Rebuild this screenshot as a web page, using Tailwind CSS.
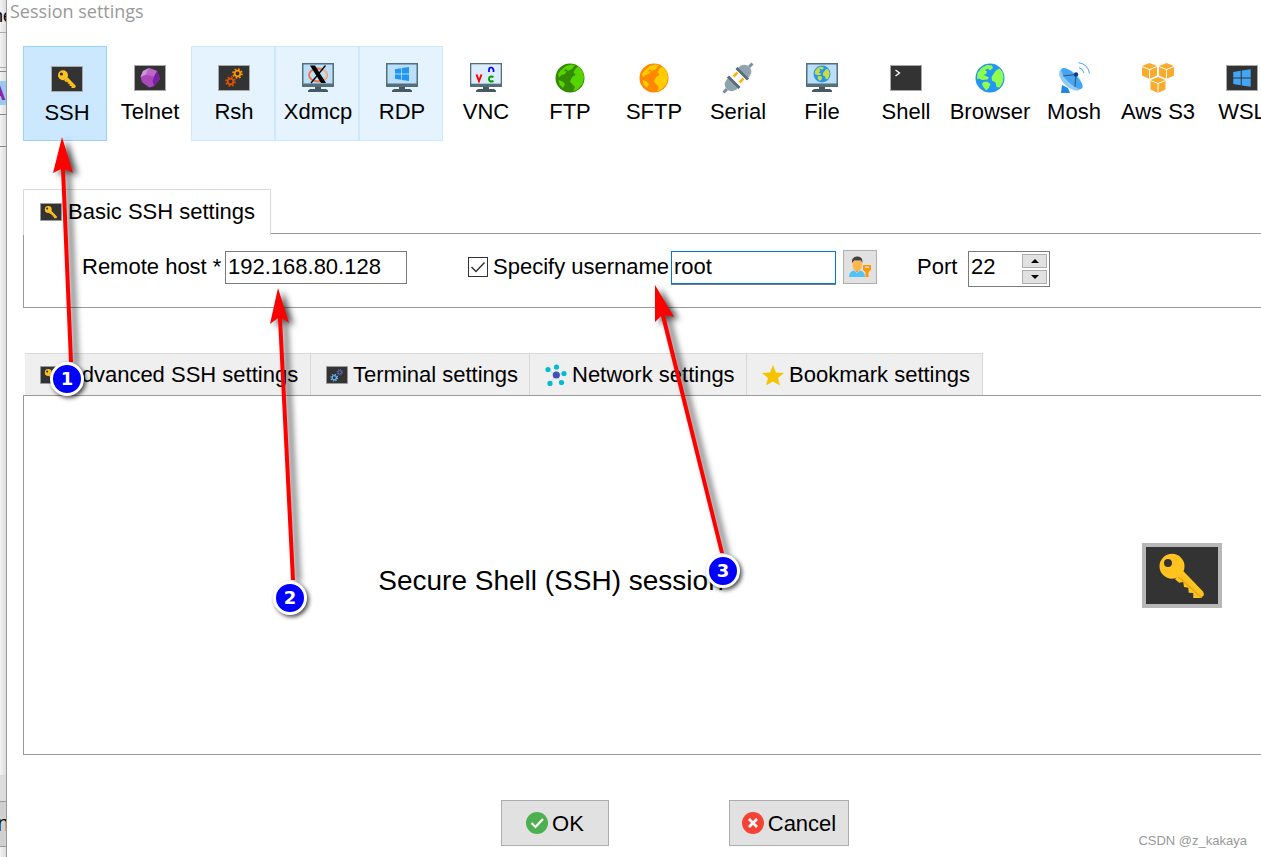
<!DOCTYPE html>
<html lang="en">
<head>
  <meta charset="UTF-8">
  <meta name="viewport" content="width=device-width, initial-scale=1.0">
  <title>Session settings</title>
  <script src="https://cdn.jsdelivr.net/npm/@tailwindcss/browser@4"></script>
</head>
<body class="bg-white text-black font-['Liberation_Sans',Arial,sans-serif] text-[22px] leading-6 overflow-hidden">

  <!-- Shared icon parts -->
  <svg class="hidden" aria-hidden="true">
    <symbol id="term" viewBox="0 0 32 32">
      <rect x=".5" y="3.5" width="31" height="25" fill="#333" stroke="#a9a9a9"/>
    </symbol>
    <symbol id="key" viewBox="0 0 32 32">
      <path d="M13.2 17.5L14.9 18.9L16.5 18.6L16.8 20.6L18.5 20.9L18.7 22.9L20.5 23V25H23.6L24.8 23.8L24.5 22.5L16.5 14.2Z" fill="#ffc31f"/>
      <path d="M14.5 16.5L23.8 24.8" stroke="#e5a50f" stroke-width=".6"/>
      <path fill-rule="evenodd" d="M12 7.3a5 5 0 1 0 0 10a5 5 0 1 0 0-10ZM10.4 9.4a1.6 1.6 0 1 1 0 3.2a1.6 1.6 0 1 1 0-3.2Z" fill="#ffc31f"/>
    </symbol>
    <symbol id="monitor" viewBox="0 0 32 32">
      <path d="M0 1H32V25H0Z" fill="#546e7a"/>
      <path d="M1.500 2.500H30.500V21.500H1.500Z" fill="#bbdefb"/>
      <path d="M13 25H19V27H24L26 28.500V30H6V28.500L8 27H13Z" fill="#455a64"/>
    </symbol>
    <symbol id="win" viewBox="0 0 16 16">
      <path d="M1 3.200L7 2.200V7.600H1ZM7.800 2L15 1V7.600H7.800ZM1 8.400H7V13.800L1 12.800ZM7.800 8.400H15V15L7.800 14Z"/>
    </symbol>
    <symbol id="lands" viewBox="0 0 32 32">
      <path d="M3.500 11L8 5.500L13 3L18 3.500L19 6L16 8.500L14 6.500L11 8L13 9.500L12 12L9.500 13L12 14L15 15.500L13.500 17.500L8 18L5 16.500L3 17Z"/>
      <path d="M9 20L13 19.500L16.500 22L15 25.500L12.500 28.500L10 26L8 22.500Z"/>
      <path d="M19.500 12L22 8.500L25.500 6.500L28.500 10L29.500 15L28.500 21L25.500 25.500L22.500 25L21.500 20.500L18 18.500L17.500 15Z"/>
    </symbol>
    <symbol id="lands-wide" viewBox="0 0 32 32">
      <path d="M7 8L12 4L17 2.500L21 3L18 7L14 9L11.500 7L10 9.500L13 9L11 12L7.500 13L5 15.500L4 12Z"/>
      <path d="M22 6L24.500 4.500L28.500 9L30 15L28.500 22L24 27L19 29.500L21 25L18.500 22.500L16 19.500L18 15L21.500 13L19.500 10Z"/>
      <path d="M4.500 18L8.500 19.500L11 22L9 26L5.500 22.500Z"/>
    </symbol>
    <symbol id="gear" viewBox="0 0 12 12">
      <circle cx="6" cy="6" r="3.100" fill="none" stroke="currentColor" stroke-width="1.900"/>
      <circle cx="6" cy="6" r="4.900" fill="none" stroke="currentColor" stroke-width="1.700" stroke-dasharray="1.925 1.925"/>
    </symbol>
  </svg>

  <div class="relative flex min-h-screen">

    <!-- Edge of the window behind the dialog -->
    <div class="flex w-[7px] shrink-0 flex-col overflow-hidden border-r border-[#999] bg-linear-to-r from-[#f4f4f4] to-[#dedede]" aria-hidden="true">
      <div class="flex h-[33px] items-center justify-center border-b border-[#aaa] text-[18px]"><span>ne</span></div>
      <div class="h-[35px] border-b border-[#aaa]"></div>
      <div class="mt-[3px] flex h-11 items-center justify-end border-t border-b border-[#888]">
        <span class="bg-[#9ac8f0] font-bold text-[#8e24aa]">A</span>
      </div>
      <div class="h-8 border-b border-[#888]"></div>
      <div class="grow"></div>
      <div class="h-[26px] bg-[#dcdcdc]"></div>
      <div class="flex h-[46px] items-center justify-center border-t border-b border-[#999] bg-[#d0d0d0]"><span>n</span></div>
      <div class="h-[10px]"></div>
    </div>

    <!-- Dialog -->
    <main class="flex min-w-0 grow flex-col">
      <h1 class="pl-[3px] font-['Open_Sans','Noto_Sans',sans-serif] text-[18px] leading-[22px] text-[#999]">Session settings</h1>

      <!-- Session types -->
      <nav class="mt-6 ml-4 flex overflow-hidden whitespace-nowrap">
        <button class="flex h-[95px] w-[84px] shrink-0 flex-col items-center border border-[#99d1ff] bg-[#cce8ff] pt-4 pl-1">
          <svg class="size-8"><use href="#term"/><use href="#key"/></svg>
          <span class="mt-[6px]">SSH</span>
        </button>
        <button class="flex h-[95px] w-[84px] shrink-0 flex-col items-center border border-transparent pt-[15px] pl-[2px]">
          <svg class="size-8" viewBox="0 0 32 32">
            <use href="#term"/>
            <path d="M15 6L23 9L26 17L20 24L15.500 25.500L8 20L6.500 15L9 9Z" fill="#ab47bc"/>
            <path d="M15 6L23 9L20 14.500L11.500 13Z" fill="#ba68c8"/>
            <path d="M15 6L9 9L6.500 15L11.500 13Z" fill="#ce93d8"/>
            <path d="M23 9L26 17L20 24L18.500 19L20 14.500Z" fill="#7b1fa2"/>
            <path d="M11.500 13L20 14.500L18.500 19L15.500 25.500L8 20Z" fill="#ab47bc"/>
          </svg>
          <span class="mt-[6px]">Telnet</span>
        </button>
        <button class="flex h-[95px] w-[84px] shrink-0 flex-col items-center border border-[#cce8ff] bg-[#e5f3ff] pt-[15px] pl-[2px]">
          <svg class="size-8" viewBox="0 0 32 32">
            <use href="#term"/>
            <use href="#gear" x="14" y="6" width="11" height="11" color="#ff9800"/>
            <use href="#gear" x="7" y="14" width="11" height="11" color="#e65100"/>
          </svg>
          <span class="mt-[6px]">Rsh</span>
        </button>
        <button class="flex h-[95px] w-[84px] shrink-0 flex-col items-center border border-[#cce8ff] bg-[#e5f3ff] pt-[15px] pl-[2px]">
          <svg class="size-8" viewBox="0 0 32 32">
            <use href="#monitor"/>
            <ellipse cx="16" cy="13" rx="9" ry="6.500" fill="none" stroke="#f4703a" stroke-width="1.800"/>
            <path d="M19 7a9 6.500 0 0 1 0 12" fill="none" stroke="#ffb980" stroke-width="1.500"/>
            <path d="M8 3.500H13L24 21H19Z" fill="#000"/>
            <path d="M23.500 3.500L9 21" stroke="#000" stroke-width="1.300"/>
          </svg>
          <span class="mt-[6px]">Xdmcp</span>
        </button>
        <button class="flex h-[95px] w-[84px] shrink-0 flex-col items-center border border-[#cce8ff] bg-[#e5f3ff] pt-[15px] pl-[2px]">
          <svg class="size-8" viewBox="0 0 32 32">
            <use href="#monitor"/>
            <use href="#win" x="8" y="4" width="16" height="16" fill="#2196f3"/>
          </svg>
          <span class="mt-[6px]">RDP</span>
        </button>
        <button class="flex h-[95px] w-[84px] shrink-0 flex-col items-center border border-transparent pt-[15px] pl-[2px]">
          <svg class="size-8" viewBox="0 0 32 32">
            <use href="#monitor"/>
            <path d="M1.500 2.500H30.500V21.500H1.500Z" fill="#dcecfb"/>
            <g fill="none" stroke-width="2">
              <path d="M6.500 12.500L9 19L11.500 12.500" stroke="#f00"/>
              <path d="M19 10V8Q19 5.500 21 5.500T23.500 8V10" stroke="#00f" stroke-width="1.700"/>
              <path d="M23.500 15Q19 13.500 19 17T23.500 19" stroke="#00a000"/>
            </g>
          </svg>
          <span class="mt-[6px]">VNC</span>
        </button>
        <button class="flex h-[95px] w-[84px] shrink-0 flex-col items-center border border-transparent pt-[15px] pl-[2px]">
          <svg class="size-8" viewBox="0 0 32 32">
            <circle cx="16" cy="16" r="14.500" fill="#338a00"/>
            <use href="#lands-wide" fill="#55d400"/>
          </svg>
          <span class="mt-[6px]">FTP</span>
        </button>
        <button class="flex h-[95px] w-[84px] shrink-0 flex-col items-center border border-transparent pt-[15px] pl-[2px]">
          <svg class="size-8" viewBox="0 0 32 32">
            <circle cx="16" cy="16" r="14.500" fill="#ff8800"/>
            <use href="#lands-wide" fill="#ffcc00"/>
          </svg>
          <span class="mt-[6px]">SFTP</span>
        </button>
        <button class="flex h-[95px] w-[84px] shrink-0 flex-col items-center border border-transparent pt-[15px] pl-[2px]">
          <svg class="size-8" viewBox="0 0 32 32">
            <path d="M1.500 30.500L5 27M27 5L30.500 1.500" stroke="#78909c" stroke-width="3"/>
            <path d="M6 16L16 26Q12 31 6.500 28.500L3.500 25.500Q1 21 6 16Z" fill="#90a4ae"/>
            <path d="M16 6L26 16Q31 11 28.500 6.500L25.500 3.500Q20 1 16 6Z" fill="#90a4ae"/>
            <path d="M11.500 14.500L15.500 10.500M17.500 20.500L21.500 16.500" stroke="#ffb300" stroke-width="2.500"/>
            <path d="M6 14.500L17.500 26M14.500 6L26 17.500" stroke="#546e7a" stroke-width="3"/>
          </svg>
          <span class="mt-[6px]">Serial</span>
        </button>
        <button class="flex h-[95px] w-[84px] shrink-0 flex-col items-center border border-transparent pt-[15px] pl-[2px]">
          <svg class="size-8" viewBox="0 0 32 32">
            <use href="#monitor"/>
            <circle cx="16" cy="12" r="8.500" fill="#2196f3"/>
            <use href="#lands" x="7" y="3" width="18" height="18" fill="#cddc39"/>
          </svg>
          <span class="mt-[6px]">File</span>
        </button>
        <button class="flex h-[95px] w-[84px] shrink-0 flex-col items-center border border-transparent pt-[15px] pl-[2px]">
          <svg class="size-8" viewBox="0 0 32 32">
            <use href="#term"/>
            <path d="M5.500 8L9.500 11L5.500 14" fill="none" stroke="#fff" stroke-width="1.300"/>
          </svg>
          <span class="mt-[6px]">Shell</span>
        </button>
        <button class="flex h-[95px] w-[84px] shrink-0 flex-col items-center border border-transparent pt-[15px] pl-[2px]">
          <svg class="size-8" viewBox="0 0 32 32">
            <circle cx="16" cy="16" r="14.500" fill="#2196f3"/>
            <use href="#lands" fill="#8fff4f"/>
          </svg>
          <span class="mt-[6px]">Browser</span>
        </button>
        <button class="flex h-[95px] w-[84px] shrink-0 flex-col items-center border border-transparent pt-[15px] pl-[2px]">
          <svg class="size-8" viewBox="0 0 32 32">
            <path d="M4 23L10 26L12 31H3Z" fill="#1e88e5"/>
            <ellipse cx="12.500" cy="17.500" rx="14" ry="7.500" transform="rotate(44 12.500 17.500)" fill="#90caf9"/>
            <ellipse cx="14" cy="16.500" rx="14" ry="5" transform="rotate(44 14 16.500)" fill="#42a5f5"/>
            <path d="M5 14L18 12.500L17 25" fill="none" stroke="#455a64" stroke-width="1.200"/>
            <circle cx="18" cy="12.500" r="2.200" fill="#0d3c8c"/>
            <path d="M20.500 .700A12 12 0 0 1 31.500 11.500M21 5.500A7.500 7.500 0 0 1 26 11" fill="none" stroke="#42a5f5"/>
          </svg>
          <span class="mt-[6px]">Mosh</span>
        </button>
        <button class="flex h-[95px] w-[84px] shrink-0 flex-col items-center border border-transparent pt-[15px] pl-[2px]">
          <svg class="size-8" viewBox="0 0 32 32">
            <g id="cube">
              <path d="M7.500 1L15 4V13.500L7.500 17L0 13.500V4Z" fill="#fbab2c"/>
              <path d="M0 4.500L7.500 7.500L15 4.500M7.500 7.500V17" fill="none" stroke="#fff"/>
            </g>
            <use href="#cube" x="17"/>
            <use href="#cube" x="8.500" y="14"/>
          </svg>
          <span class="mt-[6px]">Aws S3</span>
        </button>
        <button class="flex h-[95px] w-[84px] shrink-0 flex-col items-center border border-transparent pt-[15px] pl-[2px]">
          <svg class="size-8" viewBox="0 0 32 32">
            <use href="#term"/>
            <use href="#win" x="6" y="6" width="20" height="20" fill="#42a5f5"/>
          </svg>
          <span class="mt-[6px]">WSL</span>
        </button>
      </nav>

      <!-- Basic settings -->
      <section class="mt-12 ml-4">
        <div class="relative -mb-[2px] flex h-[46px] w-[248px] items-center gap-[6px] border border-b-0 border-[#d9d9d9] bg-white pb-[2px] pl-4 whitespace-nowrap">
          <svg class="h-[18px] w-[22px] shrink-0" viewBox="0 3 32 26"><use href="#term" width="32" height="32"/><use href="#key" width="32" height="32"/></svg>
          <h2>Basic SSH settings</h2>
        </div>
        <form class="flex h-[75px] items-start border border-r-0 border-[#999] pt-4 pl-[58px] leading-[34px] whitespace-nowrap">
          <label for="host" class="w-[143px] shrink-0">Remote host *</label>
          <input id="host" type="text" value="192.168.80.128" class="mt-px h-[33px] w-[182px] border border-[#7a7a7a] px-[2px] pb-[2px] outline-none">

          <div class="relative ml-[61px] flex w-[203px] shrink-0 items-center gap-[5px]">
            <input id="specify" type="checkbox" checked class="size-5 appearance-none border border-[#333] bg-white">
            <svg class="pointer-events-none absolute left-0 size-5" viewBox="0 0 20 20"><path d="M3.500 10L8 14.500L16.500 5.500" fill="none" stroke="#333" stroke-width="1.500"/></svg>
            <label for="specify">Specify username</label>
          </div>
          <input type="text" value="root" aria-label="Username" class="mt-px h-[33px] w-[165px] border border-[#0078d7] px-[2px] pb-[2px] shadow-[0_1px_0_#7a7a7a] outline-none">
          <button type="button" aria-label="Manage users" class="ml-[7px] grid size-[34px] shrink-0 place-items-center border border-[#adadad] bg-[#e1e1e1]">
            <svg class="size-6" viewBox="0 0 24 24">
              <path d="M1 22Q1 16.500 6 15.500L9 18L12 15.500Q17 16.500 17 22Z" fill="#4fc3f7"/>
              <path d="M6 14L9 17.500L12 14Z" fill="#e08f1f"/>
              <path d="M4.500 6H14V10Q13.500 16 9.200 16T4.500 10Z" fill="#ffb74d"/>
              <path d="M4 8Q3 2 9 1.500Q15 1 14.500 8L13 5.500H6Z" fill="#424242"/>
              <path fill-rule="evenodd" d="M15 10H23V15L20.500 17V22H17.500V17L15 15ZM17 11.500V13H21V11.500Z" fill="#ff9800"/>
            </svg>
          </button>

          <label for="port" class="ml-[38px] w-[53px] shrink-0 pl-[2px]">Port</label>
          <div class="mt-px flex h-9 w-[82px] shrink-0 border border-[#7a7a7a]">
            <input id="port" type="text" value="22" class="h-[30px] w-[53px] px-[2px] outline-none">
            <div class="flex flex-col gap-[2px] pt-[2px]">
              <button type="button" aria-label="Increase port" class="grid h-[14px] w-[25px] place-items-center border border-[#adadad] bg-[#e1e1e1]">
                <svg class="h-1 w-2" viewBox="0 0 8 4"><path d="M0 4L4 0L8 4Z"/></svg>
              </button>
              <button type="button" aria-label="Decrease port" class="grid h-[14px] w-[25px] place-items-center border border-[#adadad] bg-[#e1e1e1]">
                <svg class="h-1 w-2" viewBox="0 0 8 4"><path d="M0 0L4 4L8 0Z"/></svg>
              </button>
            </div>
          </div>
        </form>
      </section>

      <!-- Other settings -->
      <section class="mt-[45px] ml-4 flex grow flex-col">
        <div class="ml-[2px] flex h-[42px] whitespace-nowrap">
          <button class="flex w-[286px] shrink-0 items-center gap-[5px] border-t border-r border-[#d9d9d9] bg-[#efefef] pl-[15px]">
            <svg class="h-[18px] w-[22px] shrink-0" viewBox="0 3 32 26"><use href="#term" width="32" height="32"/><use href="#key" width="32" height="32"/></svg>
            Advanced SSH settings
          </button>
          <button class="flex w-[219px] shrink-0 items-center gap-[5px] border-t border-r border-[#d9d9d9] bg-[#efefef] pl-[15px]">
            <svg class="h-[18px] w-[22px] shrink-0" viewBox="0 3 32 26">
              <use href="#term" width="32" height="32"/>
              <use href="#gear" x="15" y="7" width="10" height="10" color="#5c6bc0"/>
              <use href="#gear" x="6" y="14" width="12" height="12" color="#64b5f6"/>
            </svg>
            Terminal settings
          </button>
          <button class="flex w-[217px] shrink-0 items-center gap-[5px] border-t border-r border-[#d9d9d9] bg-[#efefef] pl-[15px]">
            <svg class="size-[22px] shrink-0" viewBox="0 0 22 22">
              <path d="M11 11L3 5.500M11 11V3M11 11L19 9.500M11 11L16.500 18.500M11 11L5 19.500" stroke="#cfd8dc"/>
              <g fill="#00bcd4">
                <circle cx="3" cy="5.500" r="2.600"/><circle cx="11.500" cy="3" r="2.600"/><circle cx="19" cy="9.500" r="2.600"/><circle cx="16.500" cy="18.500" r="2.600"/><circle cx="5" cy="19.400" r="2.600"/>
              </g>
              <circle cx="11.300" cy="11" r="3.600" fill="#3f51b5"/>
            </svg>
            Network settings
          </button>
          <button class="flex w-[236px] shrink-0 items-center gap-[5px] border-t border-r border-[#d9d9d9] bg-[#efefef] pl-[15px]">
            <svg class="size-[22px] shrink-0" viewBox="0 0 22 22"><path d="M11 1L14 8.500L22 9L16 14L18 21.500L11 17.500L4 21.500L6 14L0 9L8 8.500Z" fill="#f5c400"/></svg>
            Bookmark settings
          </button>
        </div>
        <div class="flex grow items-center border border-r-0 border-[#999] pr-[39px]">
          <p class="grow pt-3 pr-16 text-center text-[28px] leading-8">Secure Shell (SSH) session</p>
          <svg class="h-[65px] w-20 shrink-0" viewBox="0 3 32 26">
            <rect x=".8" y="3.800" width="30.400" height="24.400" fill="#333" stroke="#b8b8b8" stroke-width="1.600"/>
            <use href="#key" width="32" height="32"/>
          </svg>
        </div>
      </section>

      <footer class="flex gap-[120px] pt-[45px] pb-[11px] pl-[494px]">
        <button class="flex h-[46px] w-[108px] items-center justify-center gap-1 border border-[#adadad] bg-[#e1e1e1]">
          <svg class="size-[22px]" viewBox="0 0 22 22"><circle cx="11" cy="11" r="11" fill="#4caf50"/><path d="M5.500 11L9.500 15L17 7" fill="none" stroke="#fff" stroke-width="2.200"/></svg>
          <span class="pt-[2px]">OK</span>
        </button>
        <button class="flex h-[46px] w-[120px] items-center justify-center gap-1 border border-[#adadad] bg-[#e1e1e1]">
          <svg class="size-[22px]" viewBox="0 0 22 22"><circle cx="11" cy="11" r="11" fill="#f44336"/><path d="M7 7L15 15M15 7L7 15" stroke="#fff" stroke-width="2.600"/></svg>
          <span class="pt-[2px]">Cancel</span>
        </button>
      </footer>
    </main>

    <p class="absolute right-[14px] bottom-2 text-[13px] leading-4 text-[#999]">CSDN @z_kakaya</p>

    <!-- Numbered arrows -->
    <svg class="pointer-events-none absolute inset-0 h-full w-full" aria-hidden="true">
      <g class="drop-shadow-[5px_3px_3px_rgba(0,0,0,0.7)]">
        <g fill="red">
          <path d="M62 137L73 173L65 169L73 362H69L61 169L53 173Z"/>
          <path d="M278 288L289 323L282 318L295 580H291L278 318L270 324Z"/>
          <path d="M655 285L674 317L665 315L724 553H720L661 316L655 322Z"/>
        </g>
      </g>
      <g class="drop-shadow-[2px_2px_2px_rgba(0,0,0,0.7)]">
        <g fill="#00f" stroke="#fff" stroke-width="3">
          <circle cx="67" cy="379" r="15.500"/>
          <circle cx="290" cy="598" r="15.500"/>
          <circle cx="723" cy="571" r="15.500"/>
        </g>
      </g>
      <g fill="#fff" text-anchor="middle" class="font-['DejaVu_Sans',sans-serif] text-[18px] font-bold">
        <text x="67" y="385">1</text>
        <text x="290" y="604">2</text>
        <text x="723" y="577">3</text>
      </g>
    </svg>
  </div>
</body>
</html>
